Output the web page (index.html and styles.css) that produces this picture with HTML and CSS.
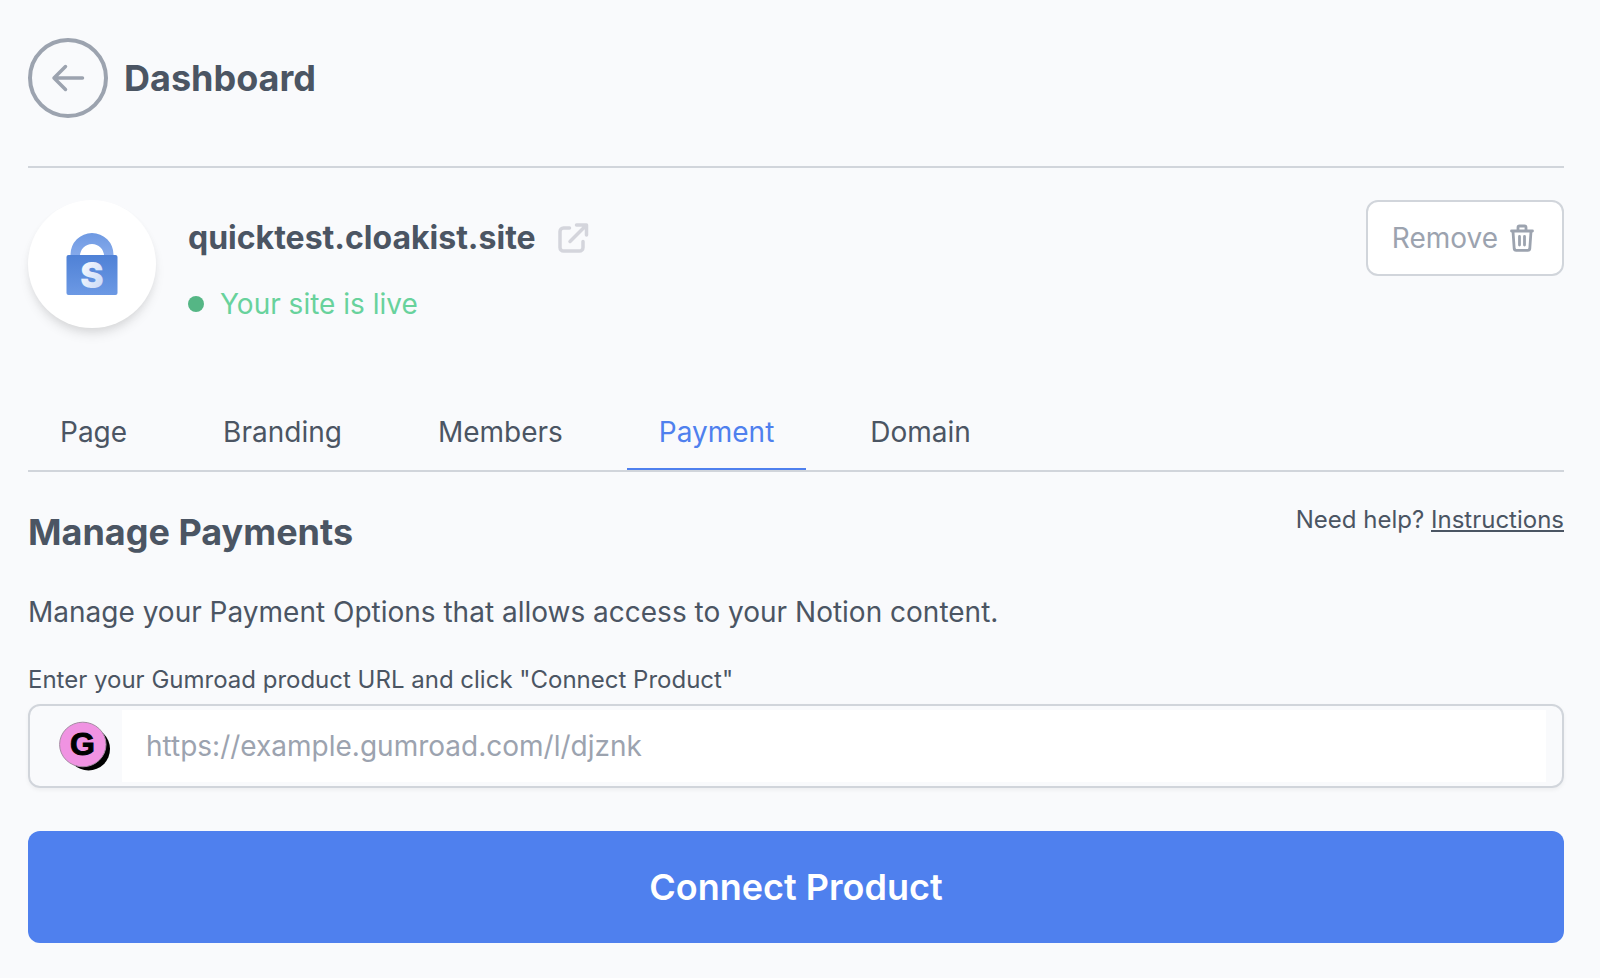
FILE: index.html
```html
<!DOCTYPE html>
<html lang="en">
<head>
    <meta charset="UTF-8">
    <meta name="viewport" content="width=device-width, initial-scale=1.0">
    <title>quicktest.cloakist.site - Payment</title>
    <link rel="stylesheet" href="styles.css">
</head>
<body>

    <header class="topbar">
        <a href="#" class="back" aria-label="Back to dashboard">
            <svg width="34" height="28" viewBox="0 0 34 28" fill="none" stroke="currentColor" stroke-width="3.500" stroke-linecap="round" stroke-linejoin="round">
                <path d="M14.500 2.500L3 14l11.500 11.500M3 14H31.500"/>
            </svg>
        </a>
        <h1>Dashboard</h1>
    </header>

    <section class="site">
        <div class="avatar">
            <svg width="52" height="64" viewBox="0 0 52 64">
                <defs>
                    <linearGradient id="shackle" x1="0" y1="0" x2="0" y2="1">
                        <stop offset="0" stop-color="#6e99e2"/>
                        <stop offset="1" stop-color="#86aaeb"/>
                    </linearGradient>
                    <linearGradient id="lock" x1="0" y1="0" x2="0" y2="1">
                        <stop offset="0" stop-color="#4f81d6"/>
                        <stop offset="1" stop-color="#6c99e4"/>
                    </linearGradient>
                    <linearGradient id="letter" x1="0" y1="0" x2="1" y2="1">
                        <stop offset="0" stop-color="#ffffff"/>
                        <stop offset="1" stop-color="#c3d5f5"/>
                    </linearGradient>
                </defs>
                <path d="M4.500 24V22.500a21.500 21.500 0 0 1 43 0V24H38a12 12 0 0 0-24 0z" fill="url(#shackle)"/>
                <rect x="0.500" y="23" width="51" height="40" rx="2" fill="url(#lock)"/>
                <text x="26" y="56" text-anchor="middle" class="lock-letter" fill="url(#letter)">S</text>
            </svg>
        </div>
        <div class="site-info">
            <div class="site-name">
                <h2>quicktest.cloakist.site</h2>
                <a href="#" class="open" aria-label="Open site">
                    <svg width="32" height="32" viewBox="0 0 32 32" fill="none" stroke="currentColor" stroke-width="3.500" stroke-linecap="round" stroke-linejoin="round">
                        <path d="M12.500 6H6.500A3.500 3.500 0 0 0 3 9.500V25.500A3.500 3.500 0 0 0 6.500 29H22.500A3.500 3.500 0 0 0 26 25.500V19.500"/>
                        <path d="M19.500 3h10v10M29 3.500L13 19.500"/>
                    </svg>
                </a>
            </div>
            <p class="status">Your site is live</p>
        </div>
        <button type="button" class="remove">
            Remove
            <svg width="24" height="28" viewBox="0 0 24 28" fill="none" stroke="currentColor" stroke-width="2.800" stroke-linecap="round" stroke-linejoin="round">
                <path d="M1.500 7h21M3 7.500l1.200 17a2 2 0 0 0 2 1.800h11.600a2 2 0 0 0 2-1.800L21 7.500M8 6.500V3.500a1.500 1.500 0 0 1 1.500-1.500h5a1.500 1.500 0 0 1 1.500 1.500v3M9.500 12.500v8.500M14.500 12.500v8.500"/>
            </svg>
        </button>
    </section>

    <nav class="tabs">
        <a href="#">Page</a>
        <a href="#">Branding</a>
        <a href="#">Members</a>
        <a href="#" class="active">Payment</a>
        <a href="#">Domain</a>
    </nav>

    <main>
        <div class="heading">
            <h2>Manage Payments</h2>
            <p class="help">Need help? <a href="#">Instructions</a></p>
        </div>
        <p class="intro">Manage your Payment Options that allows access to your Notion content.</p>

        <form>
            <label for="product">Enter your Gumroad product URL and click "Connect Product"</label>
            <div class="field">
                <svg width="52" height="52" viewBox="0 0 52 52">
                    <ellipse cx="30.500" cy="29" rx="21.500" ry="21.500" fill="#000"/>
                    <ellipse cx="24.800" cy="24.500" rx="23.200" ry="22.300" fill="#f093e2" stroke="#a58aa3"/>
                    <text x="24.500" y="35" text-anchor="middle" class="gumroad-letter">G</text>
                </svg>
                <input type="text" id="product" placeholder="https://example.gumroad.com/l/djznk">
            </div>
            <button type="submit" class="connect">Connect Product</button>
        </form>
    </main>

</body>
</html>
```
FILE: styles.css
```css
* {
    box-sizing: border-box;
}
body {
    margin: 0;
    padding: 38px 36px 35px 28px;
    font-family: Inter, "Liberation Sans", sans-serif;
    font-size: 28px;
    line-height: 40px;
    color: #4b5563;
    background-color: #f9fafc;
}
h1, h2, p {
    margin: 0;
}
h1, h2 {
    font-size: 36px;
    font-weight: 700;
}
a {
    color: inherit;
}
svg {
    display: block;
    flex: none;
}
.topbar {
    display: flex;
    align-items: center;
    gap: 16px;
    padding-bottom: 48px;
    border-bottom: 2px solid #d1d5db;
}
.back {
    display: flex;
    align-items: center;
    justify-content: center;
    width: 80px;
    height: 80px;
    border: 4px solid #9ca3af;
    border-radius: 50%;
    color: #9ca3af;
}
.site {
    display: flex;
    align-items: flex-start;
    margin-top: 32px;
}
.avatar {
    display: flex;
    align-items: center;
    justify-content: center;
    width: 128px;
    height: 128px;
    border-radius: 50%;
    background-color: white;
    box-shadow: 0 8px 12px -2px rgba(0, 0, 0, 0.1), 0 4px 8px -2px rgba(0, 0, 0, 0.06);
}
.lock-letter {
    font-size: 35px;
    font-weight: 900;
}
.site-info {
    flex: 1;
    padding: 14px 0 0 32px;
}
.site-name {
    display: flex;
    align-items: center;
    gap: 21px;
    margin-bottom: 22px;
}
.site-name h2 {
    font-size: 32px;
    line-height: 48px;
}
.open {
    color: #d4d5dc;
}
.status {
    display: flex;
    align-items: center;
    gap: 16px;
    color: #68d29c;
}
.status::before {
    content: "";
    width: 16px;
    height: 16px;
    border-radius: 50%;
    background-color: #55b685;
}
.remove {
    display: flex;
    align-items: center;
    gap: 12px;
    padding: 16px 28px 16px 24px;
    border: 2px solid #d1d5db;
    border-radius: 12px;
    font: inherit;
    color: #9ca3af;
    background-color: white;
    cursor: pointer;
}
.tabs {
    display: flex;
    gap: 32px;
    margin-top: 68px;
    border-bottom: 2px solid #d1d5db;
}
.tabs a {
    padding: 16px 32px;
    border-bottom: 2px solid transparent;
    text-decoration: none;
}
.tabs .active {
    color: #4f80ee;
    border-color: #4f80ee;
}
.heading {
    display: flex;
    justify-content: space-between;
    align-items: flex-start;
    padding-top: 32px;
}
.heading h2 {
    margin-top: 8px;
}
.help, label {
    font-size: 24px;
    line-height: 32px;
}
.help a {
    text-underline-offset: 2px;
    text-decoration-thickness: 2px;
}
.intro {
    margin: 40px 0 32px;
}
label {
    display: block;
    margin-bottom: 8px;
}
.field {
    display: flex;
    align-items: center;
    gap: 12px;
    padding: 4px 16px 4px 28px;
    border: 2px solid #d1d5db;
    border-radius: 12px;
    box-shadow: 0 2px 4px rgba(0, 0, 0, 0.05);
}
.gumroad-letter {
    font-family: "Liberation Sans", Arial, sans-serif;
    font-size: 32px;
    font-weight: 700;
    stroke: #000;
    stroke-width: 1px;
}
.field input {
    flex: 1;
    min-width: 0;
    height: 72px;
    padding: 0 24px;
    border: none;
    font: inherit;
    color: #4b5563;
    background-color: white;
}
.field input::placeholder {
    color: #9ca3af;
}
.connect {
    width: 100%;
    margin-top: 43px;
    padding: 36px;
    border: none;
    border-radius: 12px;
    font: inherit;
    font-size: 36px;
    font-weight: 600;
    color: white;
    background-color: #4f80ee;
    cursor: pointer;
}
```
